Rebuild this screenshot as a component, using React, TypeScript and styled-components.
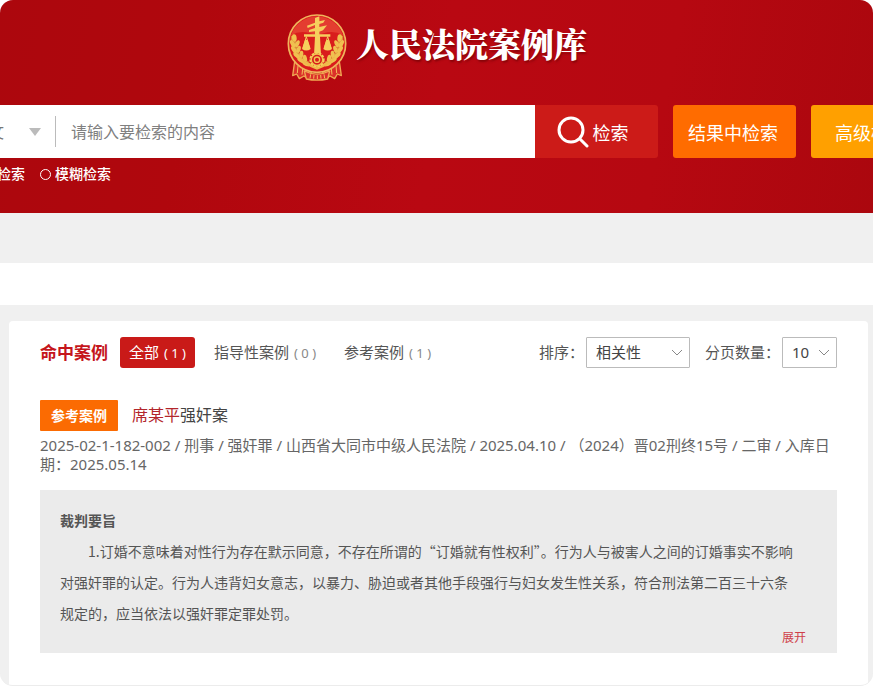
import React from "react";
import styled, { createGlobalStyle } from "styled-components";

const GlobalStyle = createGlobalStyle`
  * { box-sizing: border-box; }
  body {
    margin: 0;
    background: #fff;
    color: #555;
    font-family: "Noto Sans", "Noto Sans CJK SC", sans-serif;
    font-size: 14px;
  }
  button, input, select { font-family: inherit; border: 0; }
`;

const Page = styled.div`
  margin-right: 1px;
  background: #f0f0f0;
  border-radius: 13px;
  border-bottom: 1px solid #ececec;
  overflow: hidden;
`;

const Header = styled.header`
  height: 213px;
  padding-top: 12px;
  overflow: hidden;
  background: linear-gradient(100deg, #ac070d 0%, #b0070d 22%, #b90812 50%, #b60811 75%, #ab070e 100%);
`;

const Brand = styled.div`
  display: flex;
  justify-content: center;
  gap: 8px;
  height: 93px;
`;

const BrandName = styled.h1`
  margin: 0;
  color: #fff;
  font-size: 33px;
  line-height: 62px;
  font-weight: 900;
  font-family: "Noto Serif CJK SC", "Noto Sans CJK SC", serif;
  text-shadow: 1px 2px 2px rgba(90, 0, 0, 0.5);
`;

const SearchRow = styled.form`
  display: flex;
  height: 53px;
`;

const SearchBox = styled.div`
  flex: 1;
  min-width: 0;
  display: flex;
  align-items: center;
  background: #fff;
`;

const ScopeSelect = styled.select`
  appearance: none;
  width: 57px;
  margin-left: -28px;
  padding: 0;
  background: transparent;
  color: #777;
  font-size: 16px;
`;

const QueryInput = styled.input`
  flex: 1;
  min-width: 0;
  height: 31px;
  margin-left: 14px;
  padding: 0 15px;
  border-left: 1px solid #bbb;
  background: transparent;
  font-size: 16px;
  color: #555;
  outline: none;
  &::placeholder { color: #808080; opacity: 1; }
`;

const ActionButton = styled.button<{ $bg: string; $joined?: boolean; $cut?: boolean }>`
  flex: none;
  display: flex;
  align-items: center;
  justify-content: center;
  gap: 4px;
  width: 123px;
  padding: ${(p) => (p.$joined ? "0 8px 0 0" : "0 3px 0 0")};
  margin-left: ${(p) => (p.$joined ? 0 : 15)}px;
  margin-right: ${(p) => (p.$cut ? -61 : 0)}px;
  border-radius: ${(p) => (p.$joined ? "0 3px 3px 0" : "3px")};
  background: ${(p) => p.$bg};
  color: #fff;
  font-size: 18px;
`;

const ModeRow = styled.div`
  display: flex;
  gap: 15px;
  margin: 6px 0 0 -46px;
`;

const ModeLabel = styled.label`
  display: flex;
  align-items: center;
  gap: 4px;
  color: #fff;
  font-weight: 500;
  line-height: 20px;
`;

const ModeRadio = styled.input`
  appearance: none;
  width: 11px;
  height: 11px;
  margin: 0;
  border: 1px solid #fff;
  border-radius: 50%;
  &:checked { background: #fff; }
`;

const Band = styled.div`
  height: 42px;
  margin: 50px 0 16px;
  background: #fff;
`;

const Card = styled.main`
  margin: 0 5px 0 9px;
  padding: 16px 31px 32px;
  border-radius: 4px 4px 0 0;
  background: #fff;
`;

const Toolbar = styled.div`
  display: flex;
  align-items: center;
  height: 31px;
`;

const ToolbarTitle = styled.h2`
  margin: 0 12px 0 0;
  color: #c5161c;
  font-size: 17px;
  line-height: 31px;
`;

const Tabs = styled.nav`
  display: flex;
  gap: 10px;
  margin-right: auto;
`;

const Tab = styled.button<{ $active?: boolean }>`
  height: 31px;
  padding: 0 9px 2px;
  border-radius: 3px;
  background: ${(p) => (p.$active ? "#c91a18" : "transparent")};
  color: ${(p) => (p.$active ? "#fff" : "#555")};
  font-size: 15px;
  white-space: nowrap;
`;

const Count = styled.span<{ $active?: boolean }>`
  margin-left: 5px;
  color: ${(p) => (p.$active ? "#fff" : "#888")};
  font-size: 13px;
`;

const Field = styled.label`
  display: flex;
  align-items: center;
  gap: 2px;
  margin-left: 15px;
  font-size: 15px;
  line-height: 29px;
  white-space: nowrap;
`;

const SelectWrap = styled.span<{ $width: number }>`
  position: relative;
  width: ${(p) => p.$width}px;
  svg {
    position: absolute;
    right: 7px;
    top: 12px;
    pointer-events: none;
  }
`;

const Select = styled.select`
  appearance: none;
  display: block;
  width: 100%;
  height: 31px;
  padding: 0 9px 2px;
  border: 1px solid #bbb;
  border-radius: 1px;
  background: #fff;
  color: #444;
  font-size: 15px;
`;

const CaseHead = styled.div`
  display: flex;
  align-items: center;
  gap: 14px;
  margin-top: 32px;
`;

const Badge = styled.span`
  padding: 0 11px;
  border-radius: 1px;
  background: #fb6b02;
  color: #fff;
  font-size: 14px;
  font-weight: 700;
  line-height: 31px;
`;

const CaseTitle = styled.a`
  padding-bottom: 4px;
  color: #444;
  font-size: 16px;
  text-decoration: none;
  em { color: #b3262b; font-style: normal; }
`;

const Meta = styled.p`
  margin: 5px 0 0;
  color: #666;
  font-size: 15px;
  line-height: 19px;
`;

const Summary = styled.section`
  margin-top: 16px;
  padding: 15px 20px 8px;
  background: #ebebeb;
  font-family: "Noto Sans CJK SC", sans-serif;
  line-height: 31px;
`;

const SummaryTitle = styled.h3`
  margin: 0;
  font-size: 14px;
`;

const SummaryText = styled.p`
  margin: 0;
  text-indent: 2em;
`;

const ExpandRow = styled.div`
  display: flex;
  justify-content: flex-end;
  padding-right: 11px;
`;

const Expand = styled.button`
  padding: 0;
  background: transparent;
  color: #cf4049;
  font-size: 12px;
  line-height: 16px;
`;

const Wreath = () => (
  <g fill="#f0c050">
    <path d="M44 92 Q40 152 88 176" stroke="#dc8f38" strokeWidth="15" fill="none" />
    <ellipse cx="47" cy="98" rx="7" ry="11" transform="rotate(-8 47 98)" />
    <ellipse cx="42" cy="115" rx="6" ry="12" transform="rotate(-30 42 115)" />
    <ellipse cx="56" cy="115" rx="6" ry="11" transform="rotate(24 56 115)" />
    <ellipse cx="46" cy="133" rx="6" ry="12" transform="rotate(-38 46 133)" />
    <ellipse cx="60" cy="132" rx="6" ry="11" transform="rotate(15 60 132)" />
    <ellipse cx="54" cy="150" rx="6" ry="12" transform="rotate(-48 54 150)" />
    <ellipse cx="68" cy="147" rx="6" ry="11" transform="rotate(5 68 147)" />
    <ellipse cx="67" cy="165" rx="6" ry="12" transform="rotate(-60 67 165)" />
    <ellipse cx="79" cy="159" rx="6" ry="11" transform="rotate(-12 79 159)" />
    <ellipse cx="84" cy="176" rx="6" ry="12" transform="rotate(-72 84 176)" />
  </g>
);

const Scale = () => (
  <g>
    <path d="M83 94 L73 128 M83 94 L93 128" stroke="#f6cf5d" strokeWidth="3" />
    <path d="M79 104 H87 L96 131 Q83 140 70 131Z" fill="#f6cf5d" />
  </g>
);

const Emblem = () => (
  <svg width="62" height="70" viewBox="22 20 186 210" fill="none" aria-hidden="true">
    <g fill="#db302a" stroke="#efa953" strokeWidth="4" strokeLinejoin="round">
      <path d="M48 168 L42 211 L54 206 L62 220 L76 212 L91 222 L101 190Z" />
      <path d="M182 168 L188 211 L176 206 L168 220 L154 212 L139 222 L129 190Z" />
      <path d="M77 197 Q115 216 153 197 L147 221 Q115 228 83 221Z" />
    </g>
    <path d="M58 181 L56 203 M72 190 L70 208 M158 190 L160 208 M172 181 L174 203 M96 207 L94 219 M106 209 L105 220 M116 210 V221 M126 209 L127 220 M136 207 L138 219" stroke="#f4bd5c" strokeWidth="3" />
    <circle cx="115" cy="115" r="86" fill="#d91d1c" stroke="#efb55b" strokeWidth="5" />
    <path d="M37 90 A82 82 0 0 1 193 90 Q160 70 115 91 Q70 70 37 90Z" fill="#e43d30" />
    <Wreath />
    <g transform="translate(230 0) scale(-1 1)"><Wreath /></g>
    <path d="M109 38 L122 33 V48 L139 44 L134 52 L122 56 V65 L145 60 L133 75 L122 79 V87 H155 V94 H124 L127 148 H106 L109 94 H76 V87 H109 V78 L91 80 V74 L109 68 V59 L87 68 L85 61 L109 52Z" fill="#f6cf5d" />
    <Scale />
    <g transform="translate(64 0)"><Scale /></g>
    <path d="M60 153 Q75 181 115 193 Q155 181 170 153 Q154 174 115 180 Q76 174 60 153Z" fill="#efb94c" />
    <circle cx="115" cy="163" r="20" fill="#d91d1c" stroke="#f6cf5d" strokeWidth="6" strokeDasharray="8 3" />
    <circle cx="115" cy="163" r="17" stroke="#f2c652" strokeWidth="4" />
    <circle cx="115" cy="163" r="8" stroke="#f2c652" strokeWidth="4" />
  </svg>
);

const SearchIcon = () => (
  <svg width="32" height="32" viewBox="0 0 32 32" fill="none" stroke="#fff" strokeWidth="3" strokeLinecap="round" aria-hidden="true">
    <circle cx="14" cy="14" r="12" />
    <path d="M23 23 L30 30" />
  </svg>
);

const Chevron = () => (
  <svg width="12" height="8" viewBox="0 0 12 8" fill="none" stroke="#888" aria-hidden="true">
    <path d="M1 1 L6 6 L11 1" />
  </svg>
);

export default function App() {
  return (
    <>
      <GlobalStyle />
      <Page>
        <Header>
          <Brand>
            <Emblem />
            <BrandName>人民法院案例库</BrandName>
          </Brand>
          <SearchRow onSubmit={(e) => e.preventDefault()}>
            <SearchBox>
              <ScopeSelect aria-label="检索范围"><option>全文</option></ScopeSelect>
              <svg width="12" height="8" viewBox="0 0 12 8" aria-hidden="true"><path d="M0 0 H12 L6 8Z" fill="#bbb" /></svg>
              <QueryInput aria-label="检索内容" placeholder="请输入要检索的内容" />
            </SearchBox>
            <ActionButton type="submit" $bg="#cc1b18" $joined><SearchIcon />检索</ActionButton>
            <ActionButton type="button" $bg="#ff6c00">结果中检索</ActionButton>
            <ActionButton type="button" $bg="#ffa000" $cut>高级检索</ActionButton>
          </SearchRow>
          <ModeRow>
            <ModeLabel><ModeRadio type="radio" name="mode" defaultChecked />精确检索</ModeLabel>
            <ModeLabel><ModeRadio type="radio" name="mode" />模糊检索</ModeLabel>
          </ModeRow>
        </Header>
        <Band />
        <Card>
          <Toolbar>
            <ToolbarTitle>命中案例</ToolbarTitle>
            <Tabs>
              <Tab $active>全部<Count $active>( 1 )</Count></Tab>
              <Tab>指导性案例<Count>( 0 )</Count></Tab>
              <Tab>参考案例<Count>( 1 )</Count></Tab>
            </Tabs>
            <Field>
              排序：
              <SelectWrap $width={104}>
                <Select><option>相关性</option></Select>
                <Chevron />
              </SelectWrap>
            </Field>
            <Field>
              分页数量：
              <SelectWrap $width={55}>
                <Select><option>10</option></Select>
                <Chevron />
              </SelectWrap>
            </Field>
          </Toolbar>
          <article>
            <CaseHead>
              <Badge>参考案例</Badge>
              <CaseTitle href="#case"><em>席某平</em>强奸案</CaseTitle>
            </CaseHead>
            <Meta>
              2025-02-1-182-002 / 刑事 / 强奸罪 / 山西省大同市中级人民法院 / 2025.04.10 / （2024）晋02刑终15号 / 二审 / 入库日
              <br />
              期：2025.05.14
            </Meta>
            <Summary>
              <SummaryTitle>裁判要旨</SummaryTitle>
              <SummaryText>
                1.订婚不意味着对性行为存在默示同意，不存在所谓的“订婚就有性权利”。行为人与被害人之间的订婚事实不影响
                <br />
                对强奸罪的认定。行为人违背妇女意志，以暴力、胁迫或者其他手段强行与妇女发生性关系，符合刑法第二百三十六条
                <br />
                规定的，应当依法以强奸罪定罪处罚。
              </SummaryText>
              <ExpandRow><Expand type="button">展开</Expand></ExpandRow>
            </Summary>
          </article>
        </Card>
      </Page>
    </>
  );
}
